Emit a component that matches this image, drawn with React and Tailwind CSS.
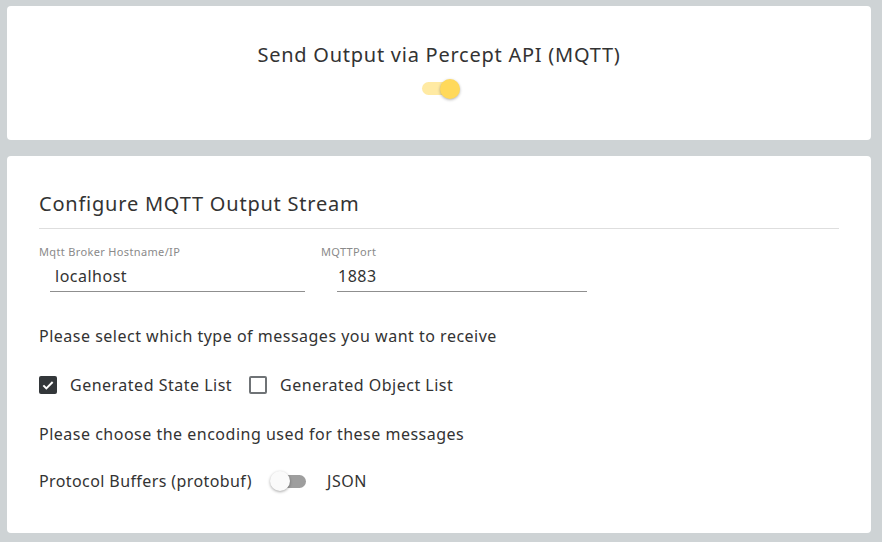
// Percept API MQTT output settings panel.
const font = { fontFamily: '"Noto Sans", "Open Sans", sans-serif' }

function Toggle({ on }) {
  return on ? (
    <span className="relative inline-flex h-[20px] w-[38px] items-center">
      <span className="h-[13px] w-[34px] rounded-full bg-[#ffeaa3]" />
      <span className="absolute right-0 top-0 h-[20px] w-[20px] rounded-full bg-[#ffd95b] shadow-[0_1px_3px_rgba(0,0,0,0.3)]" />
    </span>
  ) : (
    <span className="relative inline-flex h-[20px] w-[38px] items-center">
      <span className="ml-[2px] h-[13px] w-[34px] rounded-full bg-[#9e9e9e]" />
      <span className="absolute left-0 top-0 h-[20px] w-[20px] rounded-full bg-[#fafafa] shadow-[0_1px_3px_rgba(0,0,0,0.35)]" />
    </span>
  )
}

function Field({ label, value, className }) {
  return (
    <div className="flex flex-col">
      <span className="text-[11px] leading-[14px] tracking-[0.35px] text-[#8a8a8a]">{label}</span>
      <div className={`mt-[6px] border-b border-[#8f8f8f] pb-[4px] text-[16px] leading-[22px] text-[#333] ${className}`}>
        {value}
      </div>
    </div>
  )
}

function Check({ checked, label }) {
  return (
    <label className="flex items-center gap-[13px]">
      {checked ? (
        <span className="flex h-[18px] w-[18px] items-center justify-center rounded-[2px] bg-[#33373a]">
          <svg viewBox="0 0 24 24" className="h-[16px] w-[16px]" fill="none" stroke="white" strokeWidth="3">
            <path d="M5 12.5l4.5 4.5L19 7.5" />
          </svg>
        </span>
      ) : (
        <span className="h-[18px] w-[18px] rounded-[2px] border-2 border-[#6f7376]" />
      )}
      <span>{label}</span>
    </label>
  )
}

export default function App() {
  return (
    <div className="min-h-[542px] bg-[#ced3d5] pb-[9px] pl-[7px] pr-[11px] pt-[6px] text-[#333]" style={font}>
      <div className="flex h-[134px] flex-col items-center rounded-[4px] bg-white pt-[36px]">
        <h1 className="text-[20px] leading-[26px] tracking-[0.75px] text-[#333]">Send Output via Percept API (MQTT)</h1>
        <div className="mt-[9px] ml-[4px]">
          <Toggle on />
        </div>
      </div>

      <div className="mt-[16px] h-[377px] rounded-[4px] bg-white px-[32px] pt-[34px] text-[16px] tracking-[0.5px]">
        <h2 className="border-b border-[#dedede] pb-[10px] text-[20px] leading-[28px] tracking-[0.78px] text-[#333]">
          Configure MQTT Output Stream
        </h2>
        <div className="mt-[16px] flex gap-[16px]">
          <div className="w-[266px]">
            <Field label="Mqtt Broker Hostname/IP" value="localhost" className="ml-[11px] pl-[5px]" />
          </div>
          <div className="w-[266px]">
            <Field label="MQTTPort" value="1883" className="ml-[16px] pl-[1px]" />
          </div>
        </div>
        <p className="mt-[33px] leading-[22px]">Please select which type of messages you want to receive</p>
        <div className="mt-[27px] flex gap-[17px] leading-[22px]">
          <Check checked label="Generated State List" />
          <Check label="Generated Object List" />
        </div>
        <p className="mt-[27px] leading-[22px]">Please choose the encoding used for these messages</p>
        <div className="mt-[25px] flex items-center gap-[18px] leading-[22px]">
          <span className="tracking-[0.4px]">Protocol Buffers (protobuf)</span>
          <Toggle />
          <span className="ml-[1px]">JSON</span>
        </div>
      </div>
    </div>
  )
}
